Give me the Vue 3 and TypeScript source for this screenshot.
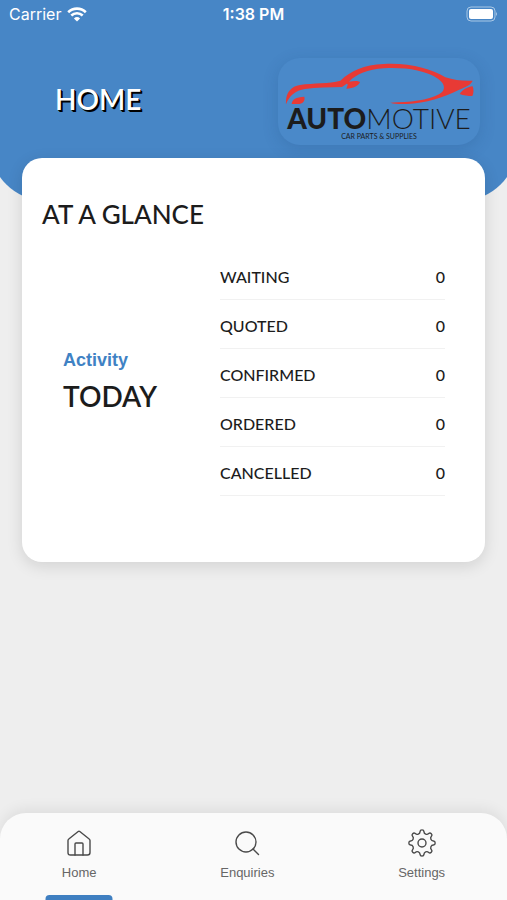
<script setup lang="ts">
import { ref } from 'vue'

interface StatusCount {
  label: string
  count: number
}

type TabId = 'home' | 'enquiries' | 'settings'

interface Tab {
  id: TabId
  label: string
}

const statuses: StatusCount[] = [
  { label: 'WAITING', count: 0 },
  { label: 'QUOTED', count: 0 },
  { label: 'CONFIRMED', count: 0 },
  { label: 'ORDERED', count: 0 },
  { label: 'CANCELLED', count: 0 },
]

const tabs: Tab[] = [
  { id: 'home', label: 'Home' },
  { id: 'enquiries', label: 'Enquiries' },
  { id: 'settings', label: 'Settings' },
]

const activeTab = ref<TabId>('home')

// Closed gear outline: four corner points per tooth, rounded through their midpoints.
function gearPath(teeth: number, inner: number, outer: number): string {
  const points: [number, number][] = []
  for (let i = 0; i < teeth; i++) {
    const corners = [[-12, inner], [-8, outer], [8, outer], [12, inner]]
    for (const [offset, radius] of corners) {
      const angle = ((i * 360) / teeth + offset) * (Math.PI / 180)
      points.push([14 + radius * Math.sin(angle), 14 - radius * Math.cos(angle)])
    }
  }
  const mid = (i: number): string => {
    const a = points[i % points.length]
    const b = points[(i + 1) % points.length]
    return `${((a[0] + b[0]) / 2).toFixed(2)} ${((a[1] + b[1]) / 2).toFixed(2)}`
  }
  let path = `M${mid(0)}`
  for (let i = 1; i <= points.length; i++) {
    const p = points[i % points.length]
    path += `Q${p[0].toFixed(2)} ${p[1].toFixed(2)} ${mid(i)}`
  }
  return path + 'Z'
}

const gear = gearPath(8, 9.8, 13.3)
</script>

<template>
  <div class="app">
    <header class="header">
      <div class="status-bar">
        <div class="carrier">
          <span>Carrier</span>
          <svg class="wifi" viewBox="0 0 20 15" aria-hidden="true">
            <path d="M1.2 5.2a12.6 12.6 0 0 1 17.6 0" />
            <path d="M4.3 8.5a8.2 8.2 0 0 1 11.4 0" />
            <path class="wifi-dot" d="M10 14.6l-3.1-3.2a4.5 4.5 0 0 1 6.2 0z" />
          </svg>
        </div>
        <span class="clock">1:38 PM</span>
        <svg class="battery" viewBox="0 0 34 16" aria-hidden="true">
          <rect class="battery-case" x="3" y="1" width="28" height="14" rx="4" />
          <rect class="battery-level" x="5" y="3" width="24" height="10" rx="2" />
          <path class="battery-cap" d="M32 6q2 2 0 4z" />
        </svg>
      </div>
      <div class="title-row">
        <h1 class="title">HOME</h1>
        <div class="logo">
          <svg class="car" viewBox="45 36 567 126" aria-hidden="true">
            <path d="M48 160C46 126 62 106 90 102C130 95 178 99 211 89C244 59 280 42 342 39C420 35 486 55 526 79C552 88 580 90 608 89C602 102 586 109 566 117C520 139 468 157 410 159C390 160 374 159 361 155C420 154 475 148 507 130C530 117 524 97 505 84C462 56 404 49 342 52C292 55 260 69 237 92C258 88 270 91 270 94C265 105 250 113 229 113C233 103 235 98 230 98L216 108C178 109 140 109 105 114C76 118 58 134 48 160Z" />
            <path d="M65 159C66 145 78 138 103 137C106 150 98 159 83 159Z" />
            <path d="M569 129C579 115 593 108 608 106C611 115 612 125 607 135C594 135 580 134 569 129Z" />
          </svg>
          <div class="brand"><strong>AUTO</strong>MOTIVE</div>
          <div class="tagline">CAR PARTS &amp; SUPPLIES</div>
        </div>
      </div>
    </header>

    <main class="content">
      <section class="card" aria-labelledby="glance-title">
        <h2 id="glance-title" class="card-title">AT A GLANCE</h2>
        <div class="glance">
          <div class="period">
            <span class="period-label">Activity</span>
            <span class="period-value">TODAY</span>
          </div>
          <table class="counts">
            <tbody>
              <tr v-for="status in statuses" :key="status.label">
                <th scope="row">{{ status.label }}</th>
                <td>{{ status.count }}</td>
              </tr>
            </tbody>
          </table>
        </div>
      </section>
    </main>

    <nav class="tab-bar">
      <button
        v-for="tab in tabs"
        :key="tab.id"
        type="button"
        class="tab"
        :class="{ active: tab.id === activeTab }"
        @click="activeTab = tab.id"
      >
        <svg class="tab-icon" viewBox="0 0 28 28" aria-hidden="true">
          <template v-if="tab.id === 'home'">
            <path d="M3 11.500Q3 10.600 3.800 10L13.200 2.500Q14 1.900 14.800 2.500L24.200 10Q25 10.600 25 11.500V23.500Q25 26 22.500 26H5.500Q3 26 3 23.500Z" />
            <path d="M10 26V15Q10 14 11 14H17Q18 14 18 15V26" />
          </template>
          <template v-else-if="tab.id === 'enquiries'">
            <circle cx="13" cy="13" r="10" />
            <path d="M20 20L25.500 25.500" />
          </template>
          <template v-else>
            <path :d="gear" />
            <circle cx="14" cy="14" r="4" />
          </template>
        </svg>
        <span>{{ tab.label }}</span>
      </button>
    </nav>
  </div>
</template>

<style>
body {
  margin: 0;
  background: #eeeeee;
}
</style>

<style scoped>
.app {
  display: flex;
  flex-direction: column;
  min-height: 100vh;
  overflow: hidden;
  background: #eeeeee;
  color: #1c1c1c;
  font-family: Futura, Lato, sans-serif;
}

.header {
  box-sizing: border-box;
  height: 201px;
  margin: 0 -10px;
  padding: 0 10px;
  border-radius: 0 0 56px 56px;
  background: #4786c6;
  color: #ffffff;
}

.status-bar {
  display: grid;
  grid-template-columns: 1fr auto 1fr;
  align-items: center;
  height: 28px;
  padding: 0 9px;
  font-family: Inter, sans-serif;
  font-size: 16px;
}

.carrier {
  display: flex;
  align-items: center;
  gap: 6px;
}

.wifi {
  width: 20px;
  height: 15px;
  fill: none;
  stroke: #ffffff;
  stroke-width: 2.6;
}

.wifi-dot {
  fill: #ffffff;
  stroke: none;
}

.clock {
  font-weight: 600;
}

.battery {
  justify-self: end;
  width: 34px;
  height: 16px;
  fill: #ffffff;
}

.battery-case {
  fill: none;
  stroke: #a9c8e6;
}

.battery-cap {
  fill: #a9c8e6;
}

.title-row {
  display: flex;
  align-items: center;
  justify-content: space-between;
  margin-top: 30px;
  padding: 0 27px 0 55px;
}

.title {
  margin: 0 0 5px;
  font-size: 28px;
  font-weight: 600;
  line-height: 32px;
  text-shadow: 1px 1px 0 #000000, 2px 2px 0 #000000;
}

.logo {
  display: flex;
  flex-direction: column;
  align-items: center;
  box-sizing: border-box;
  width: 202px;
  height: 87px;
  padding-top: 5px;
  border-radius: 22px;
  background: #4a89c9;
  box-shadow: 0 4px 16px rgba(20, 60, 110, 0.18);
  color: #1c1c1c;
}

.car {
  width: 189px;
  height: 42px;
  fill: #e83a35;
}

.brand {
  font-family: Lato, sans-serif;
  font-size: 28px;
  font-weight: 300;
  line-height: 27px;
  white-space: nowrap;
}

.brand strong {
  font-weight: 900;
}

.tagline {
  font-family: Lato, sans-serif;
  font-size: 7px;
  line-height: 8px;
}

.content {
  flex: 1;
  margin-top: -43px;
  padding: 0 22px 40px;
}

.card {
  padding: 40px 40px 66px 20px;
  border-radius: 20px;
  background: #ffffff;
  box-shadow: 0 4px 16px rgba(0, 0, 0, 0.12);
}

.card-title {
  margin: 0;
  font-size: 26px;
  font-weight: 500;
  line-height: 32px;
}

.glance {
  display: grid;
  grid-template-columns: 157px 1fr;
  align-items: center;
  margin-top: 20px;
  padding-left: 21px;
}

.period {
  display: flex;
  flex-direction: column;
  gap: 8px;
  padding-top: 14px;
}

.period-label {
  color: #3f82c4;
  font-family: "Liberation Sans", sans-serif;
  font-size: 18px;
  font-weight: 700;
  line-height: 24px;
}

.period-value {
  font-size: 28px;
  font-weight: 600;
  line-height: 32px;
}

.counts {
  width: 100%;
  border-collapse: collapse;
}

.counts th,
.counts td {
  height: 49px;
  padding: 4px 0 0;
  box-sizing: border-box;
  border-bottom: 1px solid #f1f1f1;
  font-size: 16px;
  font-weight: 500;
  text-align: left;
}

.counts td {
  text-align: right;
}

.tab-bar {
  display: flex;
  justify-content: space-around;
  height: 87px;
  border-radius: 26px 26px 0 0;
  background: #fafafa;
  box-shadow: 0 -4px 14px rgba(0, 0, 0, 0.07);
}

.tab {
  position: relative;
  display: flex;
  flex-direction: column;
  align-items: center;
  gap: 8px;
  padding: 16px 0 0;
  border: 0;
  background: none;
  color: #666666;
  font-family: "Liberation Sans", sans-serif;
  font-size: 13px;
  line-height: 16px;
}

.tab-icon {
  width: 28px;
  height: 28px;
  fill: none;
  stroke: #4a4a4a;
  stroke-width: 1.4;
  stroke-linecap: round;
  stroke-linejoin: round;
}

.active::after {
  content: "";
  position: absolute;
  bottom: 0;
  left: 50%;
  width: 67px;
  height: 5px;
  border-radius: 4px 4px 0 0;
  background: #3f7fc1;
  transform: translateX(-50%);
}
</style>
